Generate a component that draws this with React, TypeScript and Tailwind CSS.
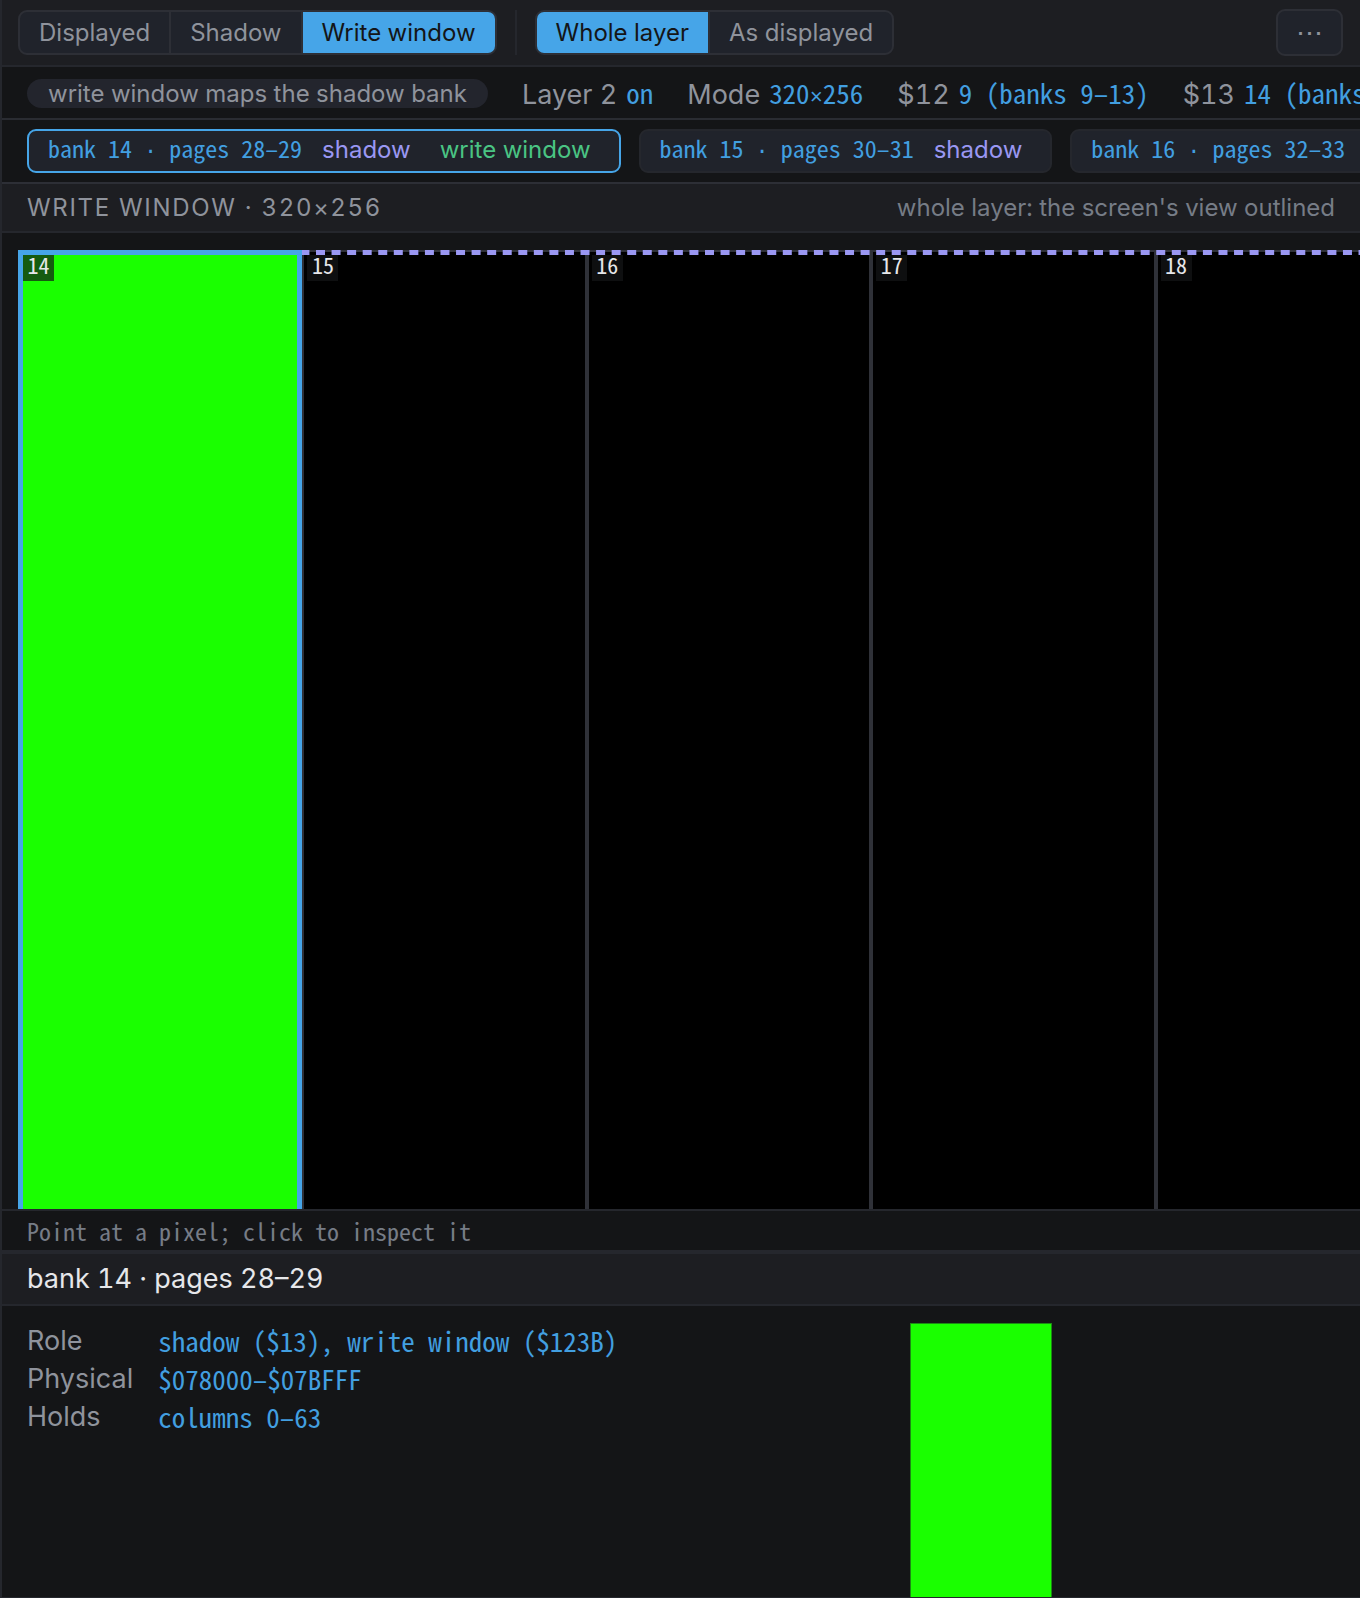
import { useState } from "react";

const SANS = "font-['Inter',sans-serif]";
const MONO = "font-['Noto_Sans_Mono_CJK_SC','Liberation_Mono',monospace]";

type Tag = { label: string; tone: "shadow" | "write" };
type Bank = { id: number; pages: string; tags: Tag[] };

const BANKS: Bank[] = [
  {
    id: 14,
    pages: "28–29",
    tags: [
      { label: "shadow", tone: "shadow" },
      { label: "write window", tone: "write" },
    ],
  },
  { id: 15, pages: "30–31", tags: [{ label: "shadow", tone: "shadow" }] },
  { id: 16, pages: "32–33", tags: [{ label: "shadow", tone: "shadow" }] },
  { id: 17, pages: "34–35", tags: [{ label: "shadow", tone: "shadow" }] },
  { id: 18, pages: "36–37", tags: [{ label: "shadow", tone: "shadow" }] },
];

const STATUS = [
  { label: "Layer 2", value: "on" },
  { label: "Mode", value: "320×256" },
  { label: "$12", value: "9 (banks 9–13)" },
  { label: "$13", value: "14 (banks 14–18)" },
];

const DETAILS = [
  { label: "Role", value: "shadow ($13), write window ($123B)" },
  { label: "Physical", value: "$078000–$07BFFF" },
  { label: "Holds", value: "columns 0–63" },
];

// the CJK mono face draws × and · full width, so those come from Liberation Mono
function MonoText({ text }: { text: string }) {
  return (
    <span className={`${MONO} text-[#429fe0]`}>
      {text.split(/([×·])/).map((part, i) =>
        part === "×" || part === "·" ? (
          <span key={i} className="font-['Liberation_Mono',monospace] text-[22px] leading-none">
            {part}
          </span>
        ) : (
          part
        ),
      )}
    </span>
  );
}

type SegmentedProps = {
  label: string;
  options: string[];
  value: string;
  onChange: (value: string) => void;
};

function Segmented({ label, options, value, onChange }: SegmentedProps) {
  return (
    <div
      role="group"
      aria-label={label}
      className="flex h-[45px] shrink-0 divide-x-2 divide-[#2d2f36] overflow-hidden rounded-[9px] border-2 border-[#2d2f36] bg-[#20232b]"
    >
      {options.map((option) => (
        <button
          key={option}
          type="button"
          aria-pressed={option === value}
          onClick={() => onChange(option)}
          className={`px-[19px] text-[24px] leading-[30px] ${option === value ? "bg-[#46a5e8] text-[#141517]" : ""}`}
        >
          {option}
        </button>
      ))}
    </div>
  );
}

function BankChip({ bank, selected, onSelect }: { bank: Bank; selected: boolean; onSelect: () => void }) {
  return (
    <button
      type="button"
      aria-pressed={selected}
      onClick={onSelect}
      className={`flex h-11 shrink-0 items-center rounded-[9px] border-2 bg-[#20232b] px-[19px] pb-1 text-[24px] leading-[30px] ${
        selected ? "border-[#46a5e8]" : "border-[#25272d]"
      }`}
    >
      <span className="flex items-baseline gap-5">
        <MonoText text={`bank ${bank.id} · pages ${bank.pages}`} />
        {bank.tags.map((tag) => (
          <span
            key={tag.label}
            className={tag.tone === "shadow" ? "pr-[9px] text-[#9a97f2]" : "pr-[9px] text-[#4ac483]"}
          >
            {tag.label}
          </span>
        ))}
      </span>
    </button>
  );
}

function LayerView({ selectedBank }: { selectedBank: number }) {
  return (
    <div className="min-h-0 flex-1 overflow-hidden pt-[17px] pl-4">
      <div className="relative grid h-full w-[1422px] grid-cols-5 bg-black">
        {BANKS.map((bank) => (
          <div
            key={bank.id}
            className={`relative border-x-2 border-t-2 border-[#2f3138] ${bank.id === 14 ? "bg-[#1aff00]" : "bg-black"}`}
          >
            {bank.id === selectedBank ? (
              <div className="absolute -inset-x-[2px] -top-[2px] bottom-0 z-10 border-x-[5px] border-t-[5px] border-[#46a5e8]" />
            ) : null}
            <span
              className={`absolute top-[3px] left-[3px] h-[26px] w-[31px] bg-[#141517]/70 text-center text-[22px] leading-[18px] text-[#e6e7ea] ${MONO}`}
            >
              {bank.id}
            </span>
          </div>
        ))}
        {/* outline of what the screen shows */}
        <svg className="absolute inset-x-0 top-0 h-[5px] w-full" aria-hidden="true">
          <line
            x1="0"
            y1="2.5"
            x2="1422"
            y2="2.5"
            stroke="#9a97f2"
            strokeWidth="5"
            strokeDasharray="9 6.56"
            strokeDashoffset="13.2"
          />
        </svg>
      </div>
    </div>
  );
}

export default function App() {
  const [source, setSource] = useState("Write window");
  const [extent, setExtent] = useState("Whole layer");
  const [selectedBank, setSelectedBank] = useState(14);
  const bank = BANKS.find((b) => b.id === selectedBank) ?? BANKS[0];

  return (
    <main
      className={`flex h-screen flex-col overflow-hidden border-b border-l-2 border-b-[#25272d] border-l-[#25272d] bg-[#141517] whitespace-nowrap text-[#8f939c] tabular-nums ${SANS}`}
    >
      <header className="flex h-[67px] shrink-0 items-center border-b-2 border-[#25272d] bg-[#1d1e22] pr-[17px] pl-4">
        <Segmented
          label="Source"
          options={["Displayed", "Shadow", "Write window"]}
          value={source}
          onChange={setSource}
        />
        <div className="mx-[18px] h-[45px] w-[2px] bg-[#25272d]" />
        <Segmented label="Extent" options={["Whole layer", "As displayed"]} value={extent} onChange={setExtent} />
        <button
          type="button"
          aria-label="More"
          className="ml-auto h-[47px] w-[67px] rounded-[9px] border-2 border-[#2d2f36] bg-[#20232b] text-[27px] leading-[30px]"
        >
          ⋯
        </button>
      </header>

      <div className="flex h-[53px] shrink-0 items-center gap-[34px] overflow-x-auto border-b-2 border-[#2a2c32] px-[25px] pt-[2px] [scrollbar-width:none]">
        <span className="shrink-0 rounded-full bg-[#23252d] px-[21px] text-[24px] leading-[29px]">
          write window maps the shadow bank
        </span>
        {STATUS.map((item) => (
          <span key={item.label} className="flex shrink-0 items-baseline gap-[9px] text-[27px] leading-9">
            {item.label}
            <MonoText text={item.value} />
          </span>
        ))}
      </div>

      <div className="flex h-16 shrink-0 items-center gap-[18px] overflow-x-auto border-b-2 border-[#2d2f36] px-[25px] [scrollbar-width:none]">
        {BANKS.map((b) => (
          <BankChip key={b.id} bank={b} selected={b.id === selectedBank} onSelect={() => setSelectedBank(b.id)} />
        ))}
      </div>

      <div className="flex h-[49px] shrink-0 items-center justify-between border-b-2 border-[#25272d] bg-[#1d1e22] px-[25px] text-[24px] leading-[30px]">
        <h1 className="tracking-[0.07em]">WRITE WINDOW · 320×256</h1>
        <span className="text-[#767c86]">whole layer: the screen's view outlined</span>
      </div>

      <LayerView selectedBank={selectedBank} />

      <p className={`h-[43px] shrink-0 border-y-2 border-[#25272d] px-[25px] text-[24px] leading-[39px] text-[#767c86] ${MONO}`}>
        Point at a pixel; click to inspect it
      </p>

      <section className="shrink-0">
        <h2 className="h-[54px] border-y-2 border-[#25272d] bg-[#1d1e22] px-[25px] text-[27px] leading-[50px] text-[#e6e7ea]">
          bank {bank.id} · pages {bank.pages}
        </h2>
        <div className="grid h-[291px] grid-cols-[2fr_1fr] gap-[34px] px-[25px] pt-[17px]">
          <dl className="grid min-w-0 grid-cols-[auto_1fr] content-start items-start gap-x-[25px] gap-y-[2px] text-[27px] leading-9">
            {DETAILS.map((row) => (
              <div key={row.label} className="contents">
                <dt>{row.label}</dt>
                <dd className={MONO}>
                  <MonoText text={row.value} />
                </dd>
              </div>
            ))}
          </dl>
          <div className="h-full w-[142px] border-x border-t border-[#1d8a14] bg-[#1aff00]" />
        </div>
      </section>
    </main>
  );
}
